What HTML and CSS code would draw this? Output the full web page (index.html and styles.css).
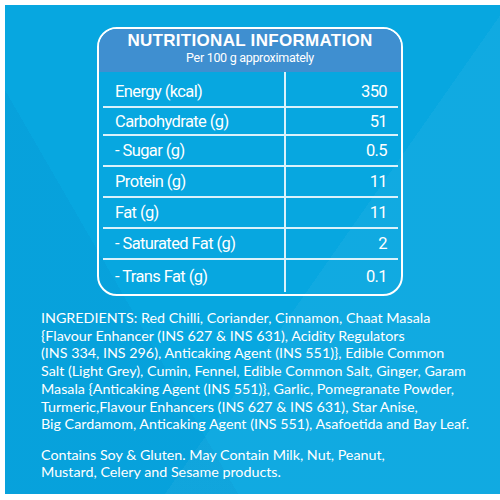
FILE: index.html
```html
<!DOCTYPE html>
<html lang="en">
<head>
  <meta charset="UTF-8" />
  <meta name="viewport" content="width=device-width, initial-scale=1.0" />
  <title>Nutritional Information</title>
  <link rel="stylesheet" href="styles.css">
</head>
<body>
  <div class="page">
    <!-- 營養表 -->
    <div class="panel">
      <div class="panel-head">
        <h1 class="panel-title">NUTRITIONAL INFORMATION</h1>
        <p class="panel-sub">Per 100 g approximately</p>
      </div>
      <div class="table">
        <div class="row"><span class="label">Energy (kcal)</span><span class="value">350</span></div>
        <div class="row"><span class="label">Carbohydrate (g)</span><span class="value">51</span></div>
        <div class="row"><span class="label">- Sugar (g)</span><span class="value">0.5</span></div>
        <div class="row"><span class="label">Protein (g)</span><span class="value">11</span></div>
        <div class="row"><span class="label">Fat (g)</span><span class="value">11</span></div>
        <div class="row"><span class="label">- Saturated Fat (g)</span><span class="value">2</span></div>
        <div class="row"><span class="label">- Trans Fat (g)</span><span class="value">0.1</span></div>
      </div>
    </div>

    <!-- 成分 -->
    <p class="text">INGREDIENTS: Red Chilli, Coriander, Cinnamon, Chaat Masala<br>
      {Flavour Enhancer (INS 627 &amp; INS 631), Acidity Regulators<br>
      (INS 334, INS 296), Anticaking Agent (INS 551)}, Edible Common<br>
      Salt (Light Grey), Cumin, Fennel, Edible Common Salt, Ginger, Garam<br>
      Masala {Anticaking Agent (INS 551)}, Garlic, Pomegranate Powder,<br>
      Turmeric,Flavour Enhancers (INS 627 &amp; INS 631), Star Anise,<br>
      Big Cardamom, Anticaking Agent (INS 551), Asafoetida and Bay Leaf.</p>
    <p class="text allergy">Contains Soy &amp; Gluten. May Contain Milk, Nut, Peanut,<br>
      Mustard, Celery and Sesame products.</p>
  </div>
</body>
</html>
```

FILE: styles.css
```css
* {
  margin: 0;
  padding: 0;
  box-sizing: border-box;
}
body {
  background-color: #ffffff;
}
.page {
  width: 500px;
  height: 500px;
  border-top: 5px solid #ffffff;
  border-left: 5px solid #ffffff;
  border-bottom: 6px solid #ffffff;
  background-color: #07a7e0;
  background-image:
    linear-gradient(125deg, rgba(255,255,255,0) 60%, rgba(255,255,255,0.04) 60%),
    linear-gradient(60deg, rgba(0,60,140,0.05) 30%, rgba(0,60,140,0) 30%);
  padding-top: 22px;
  color: #ffffff;
  overflow: hidden;
}
.panel {
  width: 306px;
  margin-left: 92px;
  border: 2px solid #ffffff;
  border-radius: 20px;
  overflow: hidden;
}
.panel-head {
  background-color: #3f8fd0;
  height: 43px;
  text-align: center;
  padding-top: 2px;
}
.panel-title {
  font-family: "Liberation Sans", Arial, sans-serif;
  font-size: 17px;
  font-weight: bold;
  letter-spacing: 0.3px;
  line-height: 20px;
}
.panel-sub {
  font-family: Roboto, "Liberation Sans", sans-serif;
  font-size: 12.5px;
  letter-spacing: -0.3px;
  line-height: 14px;
}
.table {
  padding: 0 3px 2px 4px;
  font-family: Roboto, "Liberation Sans", sans-serif;
  font-size: 16.5px;
  letter-spacing: -0.6px;
}
.row {
  display: grid;
  grid-template-columns: 183px 1fr;
  height: 31px;
  border-bottom: 2px solid rgba(255, 255, 255, 0.85);
}
.row:first-child {
  height: 36px;
  padding-top: 5px;
}
.row:nth-child(2) {
  height: 28px;
}
.row:last-child {
  border-bottom: none;
  height: 32px;
}
.label {
  display: flex;
  align-items: center;
  padding-left: 12px;
  border-right: 2px solid rgba(255, 255, 255, 0.85);
}
.value {
  display: flex;
  align-items: center;
  justify-content: flex-end;
  padding-right: 11px;
}
.row:first-child .label {
  margin-top: -5px;
  padding-top: 5px;
}
.text {
  font-family: Lato, "Open Sans", sans-serif;
  font-size: 14.3px;
  line-height: 17.7px;
  padding-left: 36px;
  margin-top: 13px;
}
.allergy {
  line-height: 17px;
  margin-top: 13px;
}
```
